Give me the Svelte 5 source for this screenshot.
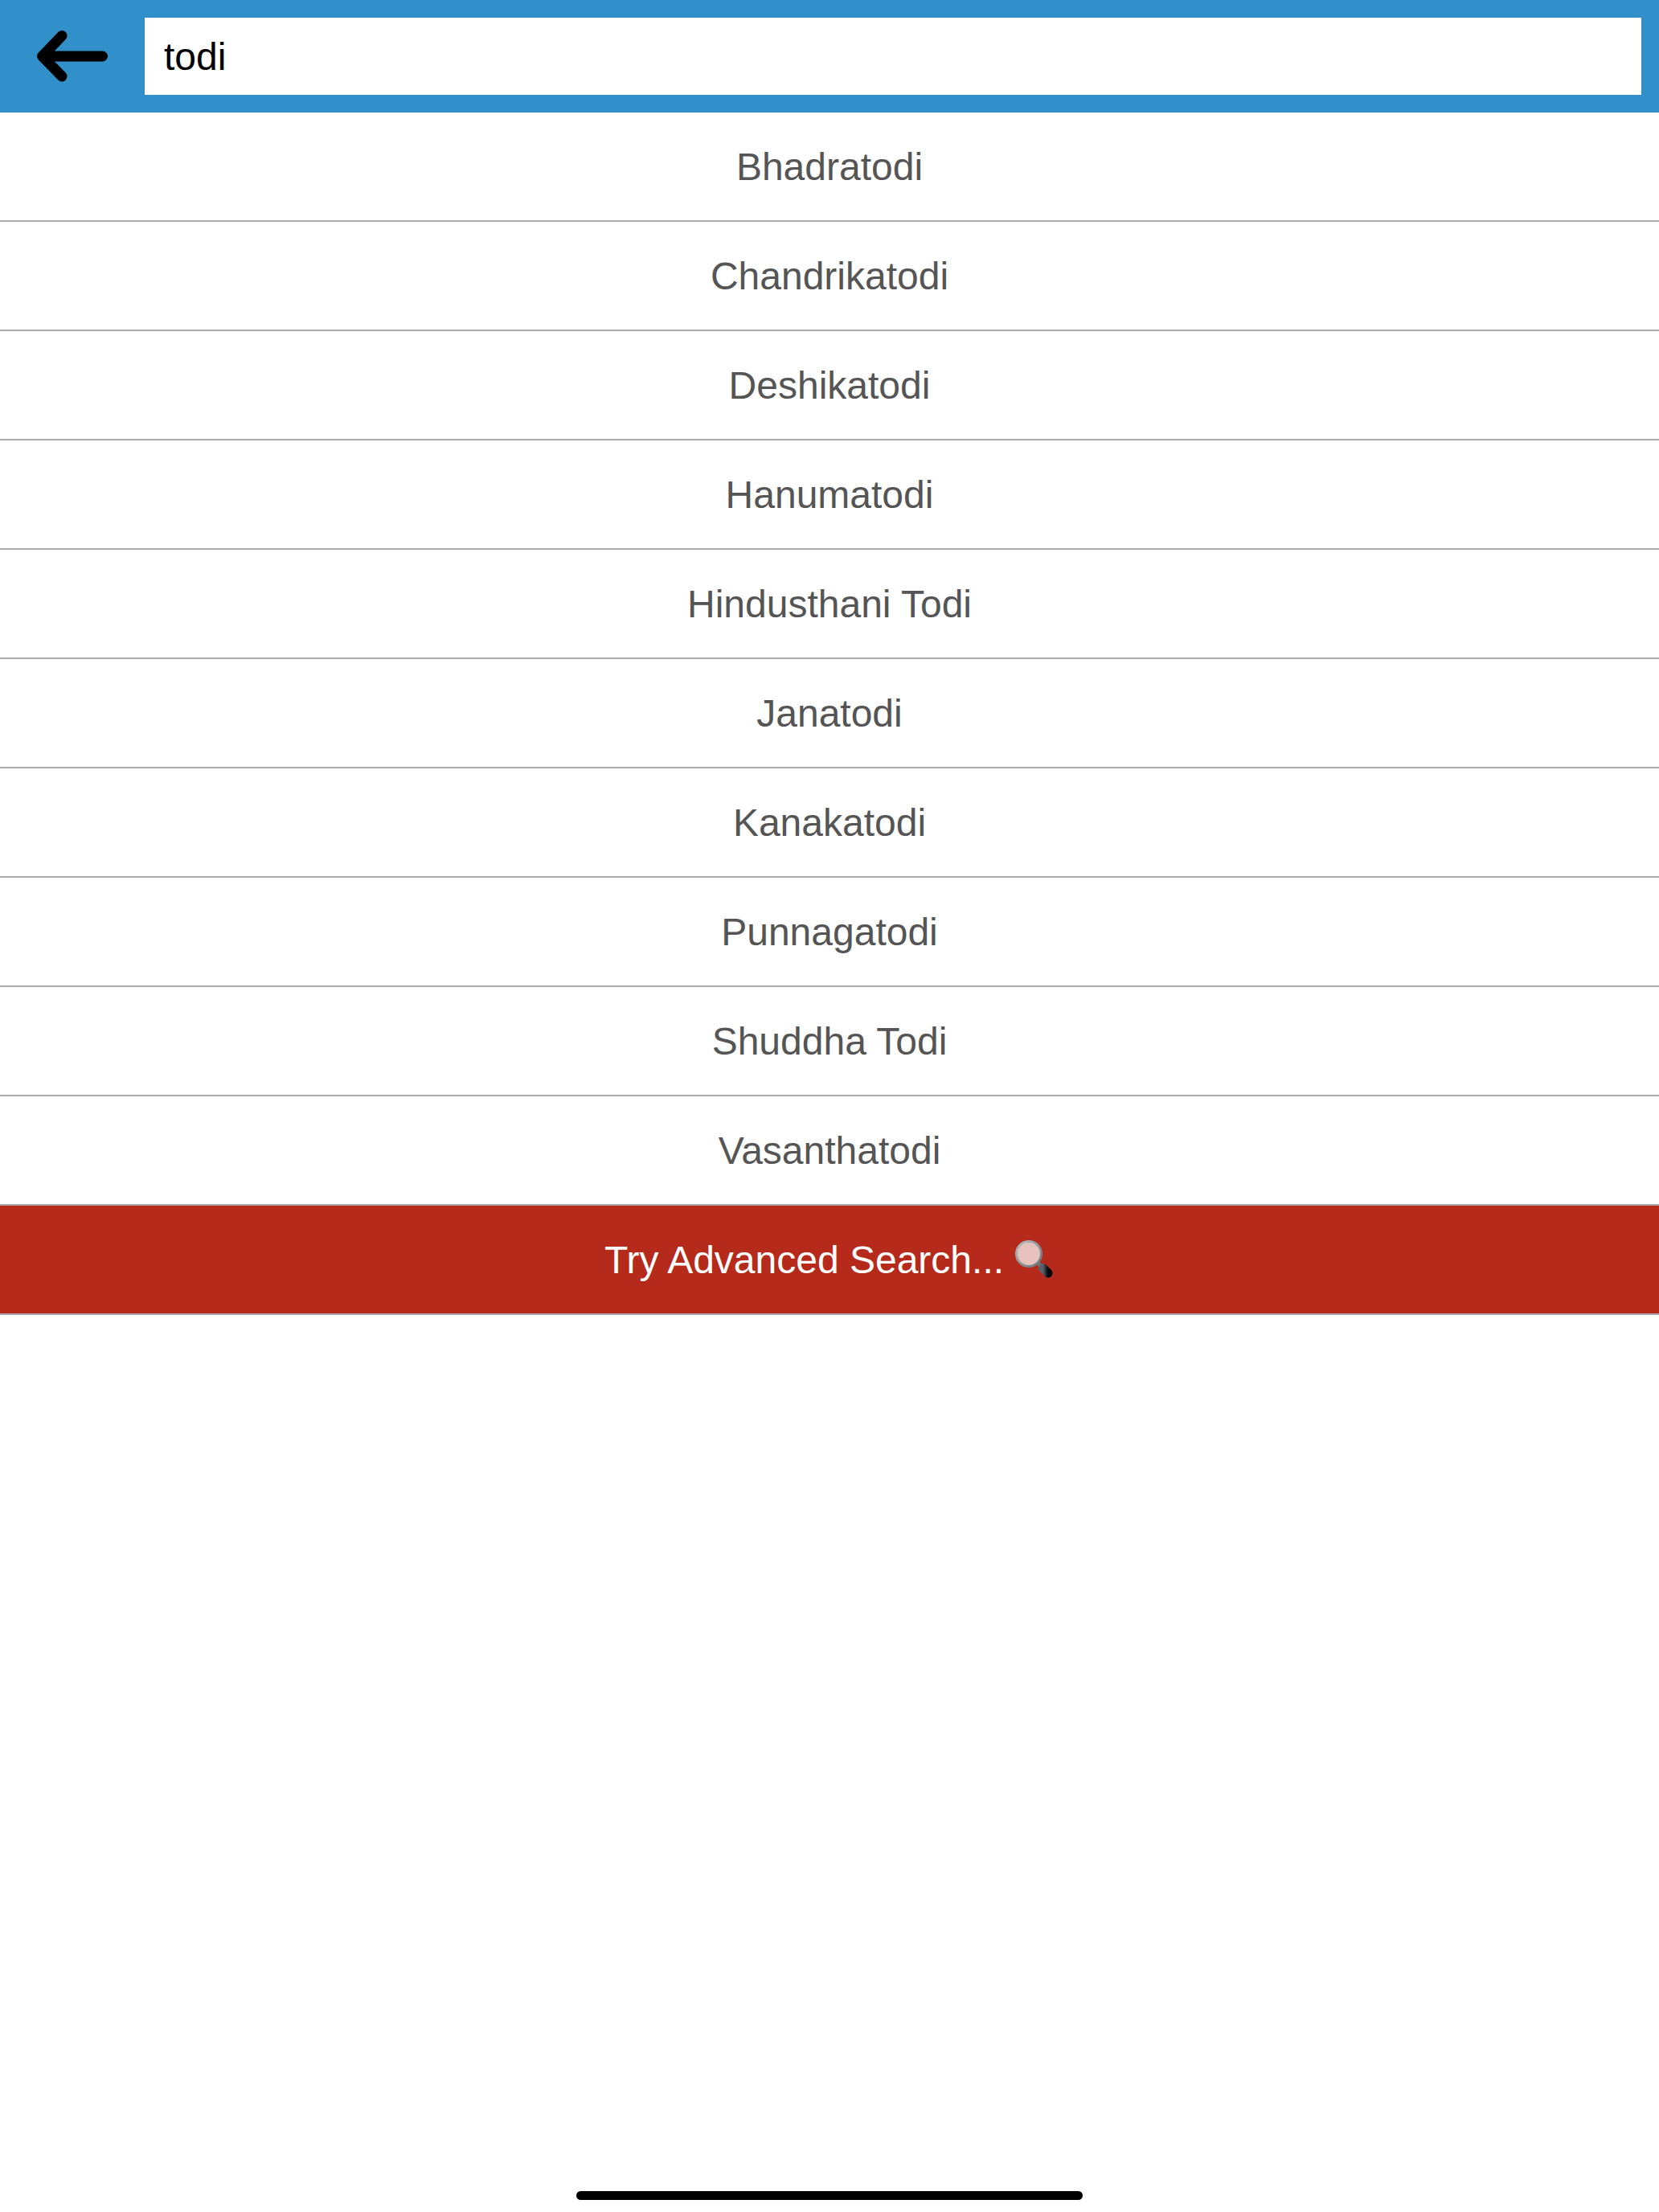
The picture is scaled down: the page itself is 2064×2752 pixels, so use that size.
<script>
	const ragas = [
		'Bhadratodi',
		'Chandrikatodi',
		'Deshikatodi',
		'Hanumatodi',
		'Hindusthani Todi',
		'Janatodi',
		'Kanakatodi',
		'Punnagatodi',
		'Shuddha Todi',
		'Vasanthatodi'
	];
	let query = $state('todi');
</script>

<div class="page">
	<header class="search-bar">
		<button class="back" aria-label="Back">
			<svg width="88" height="64" viewBox="0 0 88 64">
				<path
					d="M31 6.500 L6.500 32 L31 57 M6.500 32 L81.500 32"
					fill="none"
					stroke="#000"
					stroke-width="13"
					stroke-linecap="round"
					stroke-linejoin="round"
				/>
			</svg>
		</button>
		<input class="search-input" bind:value={query} />
	</header>

	<ul class="results">
		{#each ragas as raga}
			<li class="row">{raga}</li>
		{/each}
		<li class="row advanced">
			Try Advanced Search...
			<svg class="lens" width="50" height="50" viewBox="0 0 50 50">
				<defs>
					<linearGradient id="rim" x1="0" y1="0" x2="1" y2="1">
						<stop offset="0" stop-color="#b7c0c5" />
						<stop offset="1" stop-color="#6a7277" />
					</linearGradient>
					<linearGradient id="handle" x1="0" y1="0" x2="1" y2="0">
						<stop offset="0" stop-color="#59626a" />
						<stop offset="1" stop-color="#050607" />
					</linearGradient>
				</defs>
				<path d="M28 28 L33 33" stroke="#70777b" stroke-width="5" />
				<path d="M35.500 35.500 L42 42" stroke="url(#handle)" stroke-width="11" stroke-linecap="round" />
				<circle cx="18" cy="18" r="15.500" fill="#e7c1bc" stroke="url(#rim)" stroke-width="3" />
			</svg>
		</li>
	</ul>

	<div class="home-indicator"></div>
</div>

<style>
	:global(body) {
		margin: 0;
		background: #fff;
	}

	.page {
		display: flex;
		flex-direction: column;
		min-height: 2752px;
		font-family: 'Liberation Sans', Arial, sans-serif;
		font-size: 48px;
	}

	.search-bar {
		display: flex;
		align-items: center;
		height: 140px;
		padding-right: 22px;
		box-sizing: border-box;
		background: #3190c9;
	}

	.back {
		display: flex;
		align-items: center;
		justify-content: center;
		flex: 0 0 180px;
		height: 100%;
		padding: 0;
		border: 0;
		background: none;
	}

	.search-input {
		flex: 1;
		min-width: 0;
		height: 96px;
		padding: 0 24px;
		box-sizing: border-box;
		border: 0;
		border-radius: 0;
		outline: 0;
		background: #fff;
		color: #000;
		font: inherit;
	}

	.results {
		margin: 0;
		padding: 0;
		list-style: none;
	}

	.row {
		display: flex;
		align-items: center;
		justify-content: center;
		height: 136px;
		box-sizing: border-box;
		border-bottom: 2px solid #aaa;
		color: #555;
	}

	.advanced {
		gap: 13px;
		background: #b52a1a;
		background-clip: padding-box;
		color: #fff;
	}

	.lens {
		flex: none;
	}

	.home-indicator {
		width: 630px;
		height: 11px;
		margin: auto auto 15px;
		border-radius: 6px;
		background: #000;
	}
</style>
